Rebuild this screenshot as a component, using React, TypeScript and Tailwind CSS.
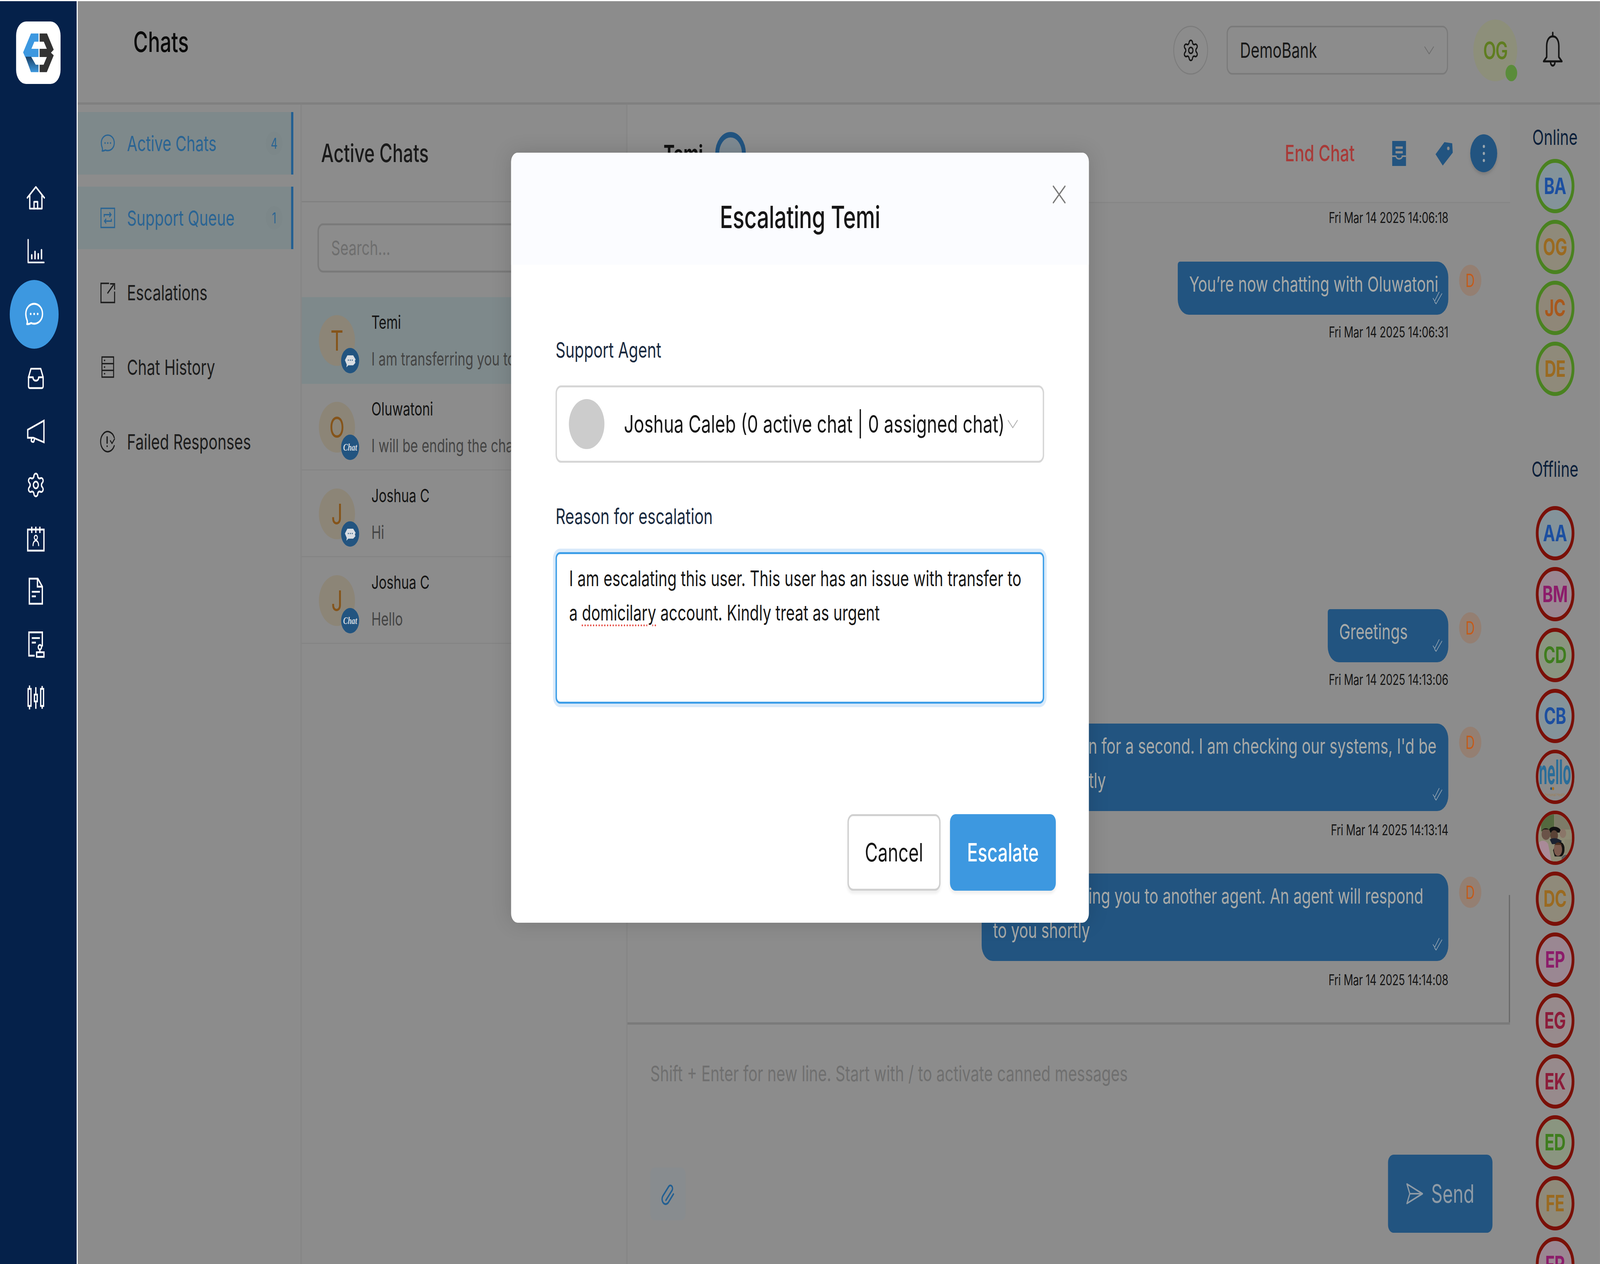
import { Settings } from "lucide-react";

const stroke = {
  fill: "none",
  stroke: "currentColor",
  strokeLinecap: "round" as const,
  strokeLinejoin: "round" as const,
};

function Logo() {
  return (
    <svg viewBox="52 45 482 480" className="w-full h-full">
      <defs>
        <linearGradient id="logoFade" x1="0" y1="0" x2="0" y2="1">
          <stop offset="0" stopColor="#1b3f63" />
          <stop offset="1" stopColor="#3d98de" />
        </linearGradient>
      </defs>
      <path d="M295 137H213L128 283L150 318H295V255H218L250 200H295Z" fill="#3d98e0" />
      <path d="M152 316H215L265 378H295V435H213Z" fill="url(#logoFade)" />
      <path d="M307 137H387L460 262L430 285L460 305L385 435H307V378H350L385 318H307V255H385L352 200H307Z" fill="#333333" />
    </svg>
  );
}

function HomeIcon() {
  return (
    <svg viewBox="0 0 24 24" className="w-[70px] h-[70px]" {...stroke} strokeWidth={1.6}>
      <path d="M1.5 11.5L12 2l10.5 9.5" />
      <path d="M4.5 9.5V21h15V9.5" />
      <path d="M9.8 21v-6h4.4v6" />
    </svg>
  );
}
function ChartIcon() {
  return (
    <svg viewBox="0 0 24 24" className="w-[70px] h-[70px]" {...stroke} strokeWidth={1.5}>
      <path d="M2.5 2v20h19.5" />
      <path d="M7 18.5v-3M11 18.5v-6M15 18.5v-4M19 18.5v-7.5" strokeWidth={1.8} />
    </svg>
  );
}
function BubbleIcon({ className }: { className: string }) {
  return (
    <svg viewBox="0 0 24 24" className={className} {...stroke} strokeWidth={1.6}>
      <path d="M12 3c5.5 0 10 3.6 10 8.6 0 4.9-4.5 8.4-10 8.4-1.3 0-2.6-.2-3.7-.6-1.3.6-3 1-5 1 .6-1 .6-2.3.3-3.2C2.9 16 2 14 2 11.6 2 6.6 6.5 3 12 3z" />
      <path d="M7.8 11.7h.01M12 11.7h.01M16.2 11.7h.01" strokeWidth={2} />
    </svg>
  );
}
function InboxIcon() {
  return (
    <svg viewBox="0 0 24 24" className="w-[70px] h-[70px]" {...stroke} strokeWidth={1.6}>
      <path d="M6 3.5h12l3 7.5v8a1.5 1.5 0 0 1-1.5 1.5h-15A1.5 1.5 0 0 1 3 19v-8z" />
      <path d="M3 11h5.5c0 2 1.4 3 3.5 3s3.500-1 3.500-3H21" />
    </svg>
  );
}
function MegaphoneIcon() {
  return (
    <svg viewBox="0 0 24 24" className="w-[70px] h-[70px]" {...stroke} strokeLinejoin="miter" strokeWidth={1.6}>
      <path d="M22 2.5v19L9 17.5H2v-7L22 2.5z" />
      <path d="M7 17.5l-.6 2.2c-.3 1.3 2.8 2.2 3.3.8l.6-2" />
    </svg>
  );
}
function CalendarIcon() {
  return (
    <svg viewBox="0 0 24 24" className="w-[70px] h-[70px]" {...stroke} strokeLinecap="butt" strokeLinejoin="miter" strokeWidth={1.6}>
      <path d="M2 4.5h20V23H2z" />
      <path d="M7 2v5.500M12 2v5.500M17 2v5.500" />
      <circle cx="12" cy="11.500" r="1.900" strokeWidth={1.2} />
      <path d="M8.500 19c0-3 1.500-4.800 3.500-4.800s3.500 1.800 3.500 4.800" strokeWidth={1.2} />
    </svg>
  );
}
function DocIcon() {
  return (
    <svg viewBox="0 0 24 24" className="w-[70px] h-[70px]" {...stroke} strokeLinecap="butt" strokeLinejoin="miter" strokeWidth={1.6}>
      <path d="M4 1h10.500L20 8v15H4z" />
      <path d="M14 1v7h6" />
      <path d="M7 12.500h10M7 16.500h5" />
    </svg>
  );
}
function StampDocIcon() {
  return (
    <svg viewBox="0 0 24 24" className="w-[70px] h-[70px]" {...stroke} strokeLinecap="butt" strokeLinejoin="miter" strokeWidth={1.6}>
      <path d="M20 14V1.500H3.500V22h7" />
      <path d="M7 6.500h10M7 10.500h5" />
      <circle cx="17" cy="14.500" r="2" />
      <path d="M17 16.500v2.500M13 19h9v4h-9z" />
    </svg>
  );
}
function CandleIcon() {
  return (
    <svg viewBox="0 0 24 24" className="w-[70px] h-[70px]" {...stroke} strokeLinecap="butt" strokeLinejoin="miter" strokeWidth={1.6}>
      <path d="M2.500 4.500h3.500v15H2.500zM4.200 1.500v3M4.200 19.500v3" />
      <path d="M10.300 9.500h3.400v6h-3.400zM12 3v6.500M12 15.500V22" />
      <path d="M18 4.500h3.500v15H18zM19.800 2v2.500M19.800 19.500V22" />
    </svg>
  );
}

function QueueIcon() {
  return (
    <svg viewBox="0 0 24 24" className="w-[56px] h-[56px]" {...stroke} strokeLinecap="butt" strokeLinejoin="miter" strokeWidth={1.5}>
      <path d="M1.500 1.500h21v21h-21z" />
      <path d="M6.500 11V8.500h10M14.500 6l2.500 2.500L14.500 11M17.500 13v2.500h-10M9.500 18L7 15.500l2.500-2.500" />
    </svg>
  );
}
function EscalateIcon() {
  return (
    <svg viewBox="0 0 24 24" className="w-[56px] h-[56px]" {...stroke} strokeLinecap="butt" strokeLinejoin="miter" strokeWidth={1.6}>
      <path d="M14 2H1.500v21h21V11" />
      <path d="M11.500 13L21 3.500M15.500 2.500h7v6.500" />
    </svg>
  );
}
function HistoryIcon() {
  return (
    <svg viewBox="0 0 24 24" className="w-[56px] h-[56px]" {...stroke} strokeLinecap="butt" strokeLinejoin="miter" strokeWidth={1.5}>
      <path d="M3 1h18v22H3zM3 8.300h18M3 15.600h18" />
      <path d="M6 4.700h2M6 12h2M6 19.300h2" />
    </svg>
  );
}
function FailedIcon() {
  return (
    <svg viewBox="0 0 24 24" className="w-[56px] h-[56px]" {...stroke} strokeWidth={1.6}>
      <path d="M22 7.500A11 11 0 1 0 22 16.500" />
      <path d="M11 7v6.500M11 17v.01" strokeWidth={2} />
      <path d="M16 11l2.500 3 4-5" strokeWidth={1.4} />
    </svg>
  );
}

function Chevron({ className }: { className: string }) {
  return (
    <svg viewBox="0 0 40 24" className={className} {...stroke} strokeWidth={2.5}>
      <path d="M4 3l16 18L36 3" />
    </svg>
  );
}

function NavItem({
  icon,
  label,
  count,
  active,
}: {
  icon: React.ReactNode;
  label: string;
  count?: string;
  active?: boolean;
}) {
  return (
    <div
      className={
        active
          ? "flex items-center h-[160px] mb-[31px] mr-[26px] pl-[80px] bg-[#7e898b] border-r-[8px] border-[#225f92] text-[#2a6493]"
          : "flex items-center h-[160px] mb-[31px] mr-[26px] pl-[80px] border-r-[8px] border-transparent text-[#1c1c1c]"
      }
    >
      <div className="w-[56px] h-[56px] shrink-0">{icon}</div>
      <span className="ml-[41px] text-[54px]">{label}</span>
      {count ? (
        <span className="ml-auto mr-[31px] w-[60px] h-[60px] rounded-full bg-[#7c8789] flex items-center justify-center text-[38px]">
          {count}
        </span>
      ) : null}
    </div>
  );
}

function ChatRow({
  letter,
  name,
  preview,
  scriptBadge,
  active,
}: {
  letter: string;
  name: string;
  preview: string;
  scriptBadge?: boolean;
  active?: boolean;
}) {
  return (
    <div
      className={
        active
          ? "flex h-[222px] shrink-0 pl-[62px] bg-[#7e898b]"
          : "flex h-[222px] shrink-0 pl-[62px] border-b-[3px] border-[#858585]"
      }
    >
      <div className="relative mt-[46px] w-[130px] h-[130px] rounded-full bg-[#8c8577] flex items-center justify-center text-[72px] leading-none text-[#85541a]">
        {letter}
        <div className="absolute left-[80px] top-[84px] w-[65px] h-[65px] rounded-full bg-[#225480] flex items-center justify-center text-[#d8dde2]">
          {scriptBadge ? (
            <span className="text-[25px] font-bold italic [font-family:'Liberation_Serif',serif]">Chat</span>
          ) : (
            <svg viewBox="0 0 24 24" className="w-[42px] h-[42px]">
              <path d="M6 4h12l5 6-1.500 2 1 3-4.500 3.500H8l-4 3 .8-4L1 11z" fill="currentColor" />
              <path d="M8 11h.01M12 11h.01M16 11h.01" stroke="#225480" strokeWidth="2" strokeLinecap="round" />
            </svg>
          )}
        </div>
      </div>
      <div className="ml-[59px] pt-[36px] w-[503px] overflow-hidden whitespace-nowrap">
        <div className="text-[47px] leading-[56px] text-[#141414]">{name}</div>
        <div className="mt-[38px] text-[47px] leading-[56px] text-[#444444]">{preview}</div>
      </div>
    </div>
  );
}

function Timestamp({ time, className }: { time: string; className: string }) {
  return (
    <div className={"pr-[222px] text-right text-[38px] leading-[44px] tracking-[-0.4px] text-[#161616] " + className}>
      {time}
    </div>
  );
}

function Bubble({ text, className }: { text: string; className: string }) {
  return (
    <div className={"flex justify-end items-start gap-[39px] pr-[103px] " + className}>
      <div className="relative min-w-[434px] max-w-[1680px] pl-[41px] pr-[36px] pt-[14px] pb-[34px] bg-[#225480] rounded-[40px] rounded-tl-[8px] text-[54px] leading-[88px] text-[#a8aaa8]">
        {text}
        <svg viewBox="0 0 36 36" className="absolute right-[21px] bottom-[26px] w-[36px] h-[36px] text-[#a8b2ba]" {...stroke} strokeWidth={1.8}>
          <path d="M2 20l6 7L24 4M8 29l5 5L34 8" />
        </svg>
      </div>
      <div className="mt-[8px] w-[80px] h-[80px] rounded-full bg-[#947f72] flex items-center justify-center text-[46px] text-[#c25c1a]">
        D
      </div>
    </div>
  );
}

const peopleOnline = [
  { id: "BA", bg: "bg-[#84939a]", fg: "text-[#1c4fa0]" },
  { id: "OG", bg: "bg-[#8f8a7a]", fg: "text-[#9a6a20]" },
  { id: "JC", bg: "bg-[#8f8778]", fg: "text-[#a8581c]" },
  { id: "DE", bg: "bg-[#8f8a7a]", fg: "text-[#9a6a20]" },
];

const blue = { bg: "bg-[#84939a]", fg: "text-[#1c4fa0]" };
const magenta = { bg: "bg-[#9a8792]", fg: "text-[#8c1c6a]" };
const green = { bg: "bg-[#8a9580]", fg: "text-[#3f7d1e]" };
const amber = { bg: "bg-[#8f8a7a]", fg: "text-[#9a6a20]" };
const crimson = { bg: "bg-[#978a8c]", fg: "text-[#8c1c3a]" };

function Person({ id, bg, fg, ring }: { id: string; bg: string; fg: string; ring: string }) {
  return (
    <div className={"w-[139px] h-[139px] shrink-0 rounded-full border-[10px] flex items-center justify-center text-[58px] font-bold tracking-[-1px] " + ring + " " + bg + " " + fg}>
      {id}
    </div>
  );
}

function NelloAvatar() {
  return (
    <div className="w-[139px] h-[139px] shrink-0 rounded-full border-[9px] border-[#7a1008] overflow-hidden bg-[#8c8c8c]">
      <svg viewBox="0 0 123 123" className="w-full h-full">
        <text x="61" y="80" textAnchor="middle" fontFamily="Inter, sans-serif" fontWeight="700" fontSize="88" textLength="118" lengthAdjust="spacingAndGlyphs" fill="#2a6d99">nello</text>
        <circle cx="47" cy="92" r="3.500" fill="#225480" />
        <circle cx="54" cy="92" r="4" fill="#a8701e" />
        <text x="61" y="112" textAnchor="middle" fontFamily="Inter, sans-serif" fontSize="10" fill="#a08050">Personal Health</text>
      </svg>
    </div>
  );
}

function PhotoAvatar() {
  return (
    <div className="w-[139px] h-[139px] shrink-0 rounded-full border-[9px] border-[#7a1008] overflow-hidden">
      <svg viewBox="0 0 123 123" className="w-full h-full">
        <rect width="123" height="123" fill="#8d8b75" />
        <rect x="60" width="63" height="40" fill="#7d7b68" />
        <path d="M10 0H58V40L42 60 10 44z" fill="#54693f" />
        <path d="M40 40c4-10 34-10 42 2l-4 6H44z" fill="#111111" />
        <ellipse cx="58" cy="56" rx="14" ry="14" fill="#5a4336" />
        <ellipse cx="28" cy="52" rx="16" ry="15" fill="#6a5348" />
        <path d="M12 44c6-10 24-10 32 0l-6-4H20z" fill="#241a18" />
        <ellipse cx="90" cy="50" rx="12" ry="12" fill="#8a7668" />
        <path d="M2 74c10-8 26-6 34 4l12 44H10z" fill="#a98a98" />
        <path d="M42 66c12-6 30-4 44 4l-8 8H50z" fill="#1b2230" />
        <path d="M66 76c14-8 28-2 30 12 1 10-4 20-12 22H60l-6-16z" fill="#151312" />
        <ellipse cx="72" cy="92" rx="15" ry="17" fill="#7c5b4e" />
        <path d="M58 84c6-14 24-14 30 0l-4-4H62z" fill="#4a2f20" />
        <path d="M86 112c8-8 20-8 28-2l-10 13H84z" fill="#55585a" />
        <rect x="96" y="66" width="27" height="36" fill="#87856f" />
      </svg>
    </div>
  );
}

export default function App() {
  return (
    <div className="relative w-[5760px] h-[3237px] origin-top-left scale-x-[0.7111] overflow-hidden flex pt-[3px] bg-white [font-family:Inter,'Noto_Sans',sans-serif]">
      <aside className="w-[280px] shrink-0 border-r-[4px] border-white bg-[#05214a] text-white">
        <div className="ml-[58px] mt-[52px] w-[160px] h-[160px] rounded-[36px] bg-white overflow-hidden">
          <Logo />
        </div>
        <nav className="mt-[225px] flex flex-col items-center pr-[18px]">
          <div className="h-[136px] flex items-center"><HomeIcon /></div>
          <div className="h-[133px] flex items-center"><ChartIcon /></div>
          <div className="w-[176px] h-[176px] mr-[12px] my-[8px] rounded-full bg-[#3d98e0] flex items-center justify-center">
            <BubbleIcon className="w-[72px] h-[72px]" />
          </div>
          <div className="h-[136px] flex items-center"><InboxIcon /></div>
          <div className="h-[136px] flex items-center"><MegaphoneIcon /></div>
          <div className="h-[137px] flex items-center"><Settings className="w-[70px] h-[70px]" strokeWidth={1.6} /></div>
          <div className="h-[136px] flex items-center"><CalendarIcon /></div>
          <div className="h-[136px] flex items-center"><DocIcon /></div>
          <div className="h-[136px] flex items-center"><StampDocIcon /></div>
          <div className="h-[136px] flex items-center"><CandleIcon /></div>
        </nav>
      </aside>

      <main className="flex-1 min-w-0 flex flex-col bg-[#8c8c8c]">
        <header className="h-[265px] shrink-0 flex items-center border-b-[6px] border-[#808080] pb-[8px]">
          <h1 className="ml-[200px] -mt-[44px] text-[72px] font-medium leading-none text-[#0a0a0a]">Chats</h1>
          <div className="ml-auto w-[125px] h-[125px] rounded-full border-[3px] border-[#7c7c7c] flex items-center justify-center text-[#151515]">
            <Settings className="w-[62px] h-[62px]" strokeWidth={1.6} />
          </div>
          <div className="ml-[67px] w-[797px] h-[125px] rounded-[20px] border-[4px] border-[#7a7a7a] flex items-center pl-[44px] pr-[44px] text-[54px] text-[#181818]">
            <span>DemoBank</span>
            <Chevron className="ml-auto w-[40px] h-[24px] text-[#6c6c6c]" />
          </div>
          <div className="relative ml-[91px] w-[158px] h-[158px] rounded-full bg-[#8d8f7a] flex items-center justify-center text-[60px] font-semibold tracking-[-2px] text-[#5f7d20]">
            OG
            <div className="absolute right-0 bottom-0 w-[42px] h-[42px] rounded-full bg-[#5a8c3a]" />
          </div>
          <svg viewBox="0 0 24 32" className="ml-[90px] mr-[132px] w-[76px] h-[100px] text-[#141414]" {...stroke} strokeWidth={1.7}>
            <path d="M12 4.500c4.500 0 7 3.500 7 8v9l3.500 3.500h-21L5 21.500v-9c0-4.500 2.500-8 7-8z" />
            <path d="M12 1.500v3M9.500 25.500c0 4 5 4 5 0" />
          </svg>
        </header>

        <div className="flex-1 min-h-0 flex">
          <section className="w-[806px] shrink-0 pt-[19px] border-r-[4px] border-[#858585]">
            <NavItem active label="Active Chats" count="4" icon={<BubbleIcon className="w-[56px] h-[56px]" />} />
            <NavItem active label="Support Queue" count="1" icon={<QueueIcon />} />
            <NavItem label="Escalations" icon={<EscalateIcon />} />
            <NavItem label="Chat History" icon={<HistoryIcon />} />
            <NavItem label="Failed Responses" icon={<FailedIcon />} />
          </section>

          <section className="w-[1173px] shrink-0 flex flex-col border-r-[4px] border-[#858585] overflow-hidden">
            <div className="h-[250px] shrink-0 flex items-center pl-[70px] border-b-[3px] border-[#808080] text-[64px] font-medium text-[#1a1a1a]">
              Active Chats
            </div>
            <div className="mt-[54px] ml-[57px] w-[1060px] h-[126px] shrink-0 rounded-[20px] border-[5px] border-[#7a7a7a] flex items-center pl-[44px] text-[51px] text-[#6e6e6e]">
              Search...
            </div>
            <div className="mt-[63px] flex flex-col">
              <ChatRow active letter="T" name="Temi" preview="I am transferring you to another agent" />
              <ChatRow scriptBadge letter="O" name="Oluwatoni" preview="I will be ending the chat now" />
              <ChatRow letter="J" name="Joshua C" preview="Hi" />
              <ChatRow scriptBadge letter="J" name="Joshua C" preview="Hello" />
            </div>
          </section>

          <section className="w-[3177px] shrink-0 flex flex-col">
            <div className="h-[252px] shrink-0 flex items-center pl-[130px] pr-[46px] border-b-[3px] border-[#868686] bg-[#8e8e8e]">
              <span className="text-[60px] font-bold text-[#111111]">Temi</span>
              <div className="ml-[44px] w-[110px] h-[110px] rounded-full border-[14px] border-[#225480] bg-[#7e8a92]" />
              <span className="ml-auto text-[58px] font-medium text-[#a83a38]">End Chat</span>
              <svg viewBox="0 0 50 64" className="ml-[135px] w-[50px] h-[64px]">
                <path d="M0 0h50v64H0z" fill="#225480" />
                <path d="M12 17h26M12 29h26" stroke="#8c8c8c" strokeWidth="6" />
                <path d="M0 39h14c0 9 22 9 22 0h14" fill="none" stroke="#8c8c8c" strokeWidth="4" />
              </svg>
              <svg viewBox="0 0 62 62" className="ml-[106px] w-[62px] h-[62px]">
                <path d="M32 2l28 3 2 24L26 62 0 33z" fill="#225480" />
                <circle cx="46" cy="18" r="4.500" fill="#8c8c8c" />
              </svg>
              <div className="ml-[63px] w-[97px] h-[97px] rounded-full bg-[#225480] shadow-[0_6px_8px_#7c7c7c] flex flex-col items-center justify-center gap-[10px]">
                <span className="w-[8px] h-[8px] rounded-full bg-[#9aa6ae]" />
                <span className="w-[8px] h-[8px] rounded-full bg-[#9aa6ae]" />
                <span className="w-[8px] h-[8px] rounded-full bg-[#9aa6ae]" />
              </div>
            </div>

            <div className="relative flex-1 min-h-0 pt-[15px]">
              <Timestamp time="Fri Mar 14 2025 14:06:18" className="" />
              <Bubble className="mt-[91px]" text="You’re now chatting with Oluwatoni" />
              <Timestamp time="Fri Mar 14 2025 14:06:31" className="mt-[22px]" />
              <Bubble className="mt-[688px]" text="Greetings" />
              <Timestamp time="Fri Mar 14 2025 14:13:06" className="mt-[22px]" />
              <Bubble className="mt-[91px]" text="Please hold on for a second. I am checking our systems, I'd be with you shortly" />
              <Timestamp time="Fri Mar 14 2025 14:13:14" className="mt-[26px]" />
              <Bubble className="mt-[90px]" text="I am transferring you to another agent. An agent will respond to you shortly" />
              <Timestamp time="Fri Mar 14 2025 14:14:08" className="mt-[26px]" />
              <div className="absolute right-0 bottom-0 w-[4px] h-[326px] bg-[#666666]" />
            </div>

            <div className="h-[619px] shrink-0 flex flex-col justify-between border-t-[6px] border-[#7a7a7a] pl-[82px] pr-[63px] pb-[80px]">
              <div className="pt-[95px] text-[54.7px] leading-[60px] text-[#6f6f6f]">
                Shift + Enter for new line. Start with / to activate canned messages
              </div>
              <div className="flex items-center justify-between">
                <div className="w-[127px] h-[135px] rounded-[16px] bg-[#888c8f] flex items-center justify-center text-[#225f92]">
                  <svg viewBox="0 0 24 24" className="w-[62px] h-[62px]" {...stroke} strokeWidth={1.8}>
                    <path d="M9 18.500L17.500 8.800a3 3 0 0 0-4.500-4L4.800 14.200a5 5 0 0 0 7.500 6.600l7.200-8.400" />
                  </svg>
                </div>
                <div className="w-[376px] h-[200px] rounded-[20px] bg-[#225480] flex items-center justify-center gap-[28px] text-[64px] text-[#8f9ba6]">
                  <svg viewBox="0 0 60 60" className="w-[62px] h-[62px]" {...stroke} strokeWidth={4}>
                    <path d="M3 6l54 24L3 54l10-24zM13 30h44" />
                  </svg>
                  <span>Send</span>
                </div>
              </div>
            </div>
          </section>

          <section className="flex-1 min-w-0 flex flex-col items-center pt-[56px] overflow-hidden">
            <div className="text-[54px] leading-[56px] text-[#0b1f3a]">Online</div>
            <div className="mt-[27px] flex flex-col gap-[17px]">
              {peopleOnline.map((p) => (
                <Person key={p.id} id={p.id} bg={p.bg} fg={p.fg} ring="border-[#4a8220]" />
              ))}
            </div>
            <div className="mt-[160px] text-[54px] leading-[56px] text-[#0b1f3a]">Offline</div>
            <div className="mt-[66px] flex flex-col gap-[17px]">
              <Person id="AA" {...blue} ring="border-[#7a1008]" />
              <Person id="BM" {...magenta} ring="border-[#7a1008]" />
              <Person id="CD" {...green} ring="border-[#7a1008]" />
              <Person id="CB" {...blue} ring="border-[#7a1008]" />
              <NelloAvatar />
              <PhotoAvatar />
              <Person id="DC" {...amber} ring="border-[#7a1008]" />
              <Person id="EP" {...magenta} ring="border-[#7a1008]" />
              <Person id="EG" {...crimson} ring="border-[#7a1008]" />
              <Person id="EK" {...crimson} ring="border-[#7a1008]" />
              <Person id="ED" {...green} ring="border-[#7a1008]" />
              <Person id="FE" {...amber} ring="border-[#7a1008]" />
              <Person id="FR" {...magenta} ring="border-[#7a1008]" />
            </div>
          </section>
        </div>
      </main>

      {/* escalation modal, centred over the whole page */}
      <div className="absolute left-[1840px] top-[391px] w-[2080px] h-[1972px] rounded-[24px] bg-white overflow-hidden flex flex-col shadow-[0_0_60px_rgba(0,0,0,0.15)]">
        <div className="relative h-[287px] shrink-0 bg-[#fbfcff] flex items-center justify-center text-[78px] font-medium tracking-[-0.5px] text-[#161616]">
          <span className="mt-[42px]">Escalating Temi</span>
          <svg viewBox="0 0 48 48" className="absolute left-[1949px] top-[83px] w-[48px] h-[48px] text-[#7a7a7a]" {...stroke} strokeWidth={4}>
            <path d="M3 3l42 42M45 3L3 45" />
          </svg>
        </div>
        <div className="flex-1 flex flex-col px-[160px]">
          <label className="mt-[188px] text-[55.5px] leading-[60px] text-[#1a2a3f]">Support Agent</label>
          <div className="mt-[61px] w-[1759px] h-[198px] shrink-0 rounded-[20px] border-[5px] border-[#d6d6d6] flex items-center pl-[43px]">
            <div className="w-[128px] h-[128px] shrink-0 rounded-full bg-[#cccccc]" />
            <span className="ml-[70px] text-[62.5px] text-[#161616] whitespace-nowrap">
              Joshua Caleb (0 active chat | 0 assigned chat)
            </span>
            <Chevron className="ml-[8px] w-[42px] h-[26px] text-[#b0b0b0]" />
          </div>
          <label className="mt-[107px] text-[55.5px] leading-[60px] text-[#1a2a3f]">Reason for escalation</label>
          <div className="mt-[62px] w-[1759px] h-[388px] shrink-0 rounded-[16px] border-[5px] border-[#3d9ee8] shadow-[0_0_0_9px_#d9eafa] pl-[44px] pt-[18px] text-[54.5px] leading-[88px] text-[#161616]">
            I am escalating this user. This user has an issue with transfer to
            <br />a{" "}
            <span className="underline decoration-dotted decoration-[#e5483f] decoration-[5px] underline-offset-[10px]">
              domicilary
            </span>{" "}
            account. Kindly treat as urgent
          </div>
          <div className="mt-[283px] -mr-[41px] flex justify-end gap-[34px]">
            <button className="w-[335px] h-[196px] rounded-[20px] border-[5px] border-[#d0d0d0] bg-white shadow-[0_8px_8px_#f0f0f0] text-[64px] text-[#161616]">
              Cancel
            </button>
            <button className="w-[381px] h-[196px] rounded-[20px] bg-[#3d98e0] shadow-[0_8px_8px_#f0f0f0] text-[64px] font-medium text-white">
              Escalate
            </button>
          </div>
        </div>
      </div>
    </div>
  );
}
